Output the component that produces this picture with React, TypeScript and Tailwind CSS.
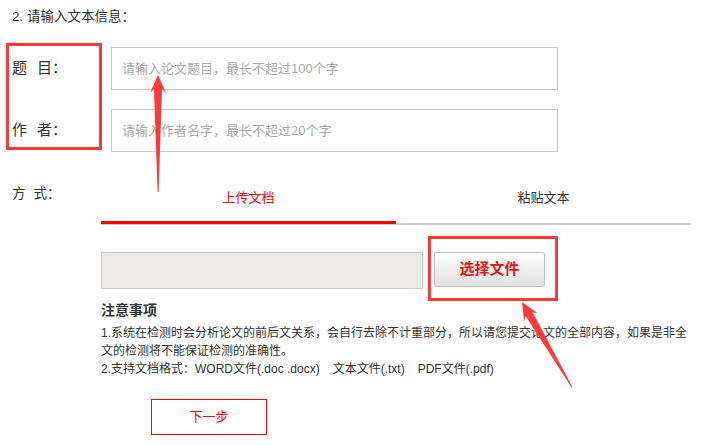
import React from "react";

const font = "font-['Liberation_Sans','Noto_Sans_CJK_SC',sans-serif]";

const App = () => {
  return (
    <div className={`relative w-[704px] h-[445px] overflow-hidden bg-white text-[#333] ${font}`}>
      {/* 标题 */}
      <div className="pl-[12px] pt-[8px] text-[13.5px] leading-[18px]">2. 请输入文本信息：</div>

      {/* 题目 */}
      <div className="mt-[21px] flex items-center">
        <div className="w-[111px] pl-[12px] text-[15px]">
          题<span className="ml-[10px]">目：</span>
        </div>
        <input
          className="w-[447px] h-[43px] border border-[#c8c8c8] px-[10px] text-[13px] outline-none placeholder:text-[#aaa]"
          placeholder="请输入论文题目，最长不超过100个字"
        />
      </div>

      {/* 作者 */}
      <div className="mt-[19px] flex items-center">
        <div className="w-[111px] pl-[12px] text-[15px]">
          作<span className="ml-[10px]">者：</span>
        </div>
        <input
          className="w-[447px] h-[43px] border border-[#c8c8c8] px-[10px] text-[13px] outline-none placeholder:text-[#aaa]"
          placeholder="请输入作者名字，最长不超过20个字"
        />
      </div>

      {/* 方式 */}
      <div className="mt-[23px] flex items-start">
        <div className="w-[101px] pl-[12px] pt-[9px] text-[13.5px] leading-[20px]">
          方<span className="ml-[8px]">式：</span>
        </div>
        <div className="w-[590px]">
          {/* tabs */}
          <div className="flex">
            <div className="flex-1 flex flex-col">
              <div className="h-[46px] flex items-center justify-center text-[13px] text-[#ff0000]">上传文档</div>
              <div className="h-[3px] bg-[#ff0000]" />
            </div>
            <div className="flex-1 flex flex-col">
              <div className="h-[46px] flex items-center justify-center text-[13px] text-[#333]">粘贴文本</div>
              <div className="h-[3px] flex flex-col justify-end">
                <div className="h-px bg-[#ccc]" />
              </div>
            </div>
          </div>
          <div className="h-px bg-[#ccc]" />

          {/* 上传 */}
          <div className="mt-[27px] flex items-start">
            <div className="w-[322px] h-[37px] bg-[#ebeae4] border border-[#ccc]" />
            <button className="ml-[11px] w-[111px] h-[35px] rounded-[3px] border border-[#c0c0c0] bg-gradient-to-b from-[#fdfdfd] to-[#e2e2e2] text-[15px] font-bold text-[#e8140f]">
              选择文件
            </button>
          </div>

          {/* 注意事项 */}
          <div className="mt-[11px] text-[14px] leading-[20px] font-bold text-[#333]">注意事项</div>
          <div className="mt-[4px] text-[12px] leading-[18px] text-[#333] whitespace-nowrap">
            <div>1.系统在检测时会分析论文的前后文关系，会自行去除不计重部分，所以请您提交论文的全部内容，如果是非全</div>
            <div>文的检测将不能保证检测的准确性。</div>
            <div className="flex">
              <span>2.支持文档格式：WORD文件(.doc .docx)</span>
              <span className="ml-[13px]">文本文件(.txt)</span>
              <span className="ml-[13px]">PDF文件(.pdf)</span>
            </div>
          </div>

          <button className="mt-[21px] ml-[50px] w-[116px] h-[36px] border border-[#ff0000] text-[13px] text-[#ff0000] bg-white">
            下一步
          </button>
        </div>
      </div>

      {/* 标注：红框与箭头 */}
      <div className="absolute left-[6px] top-[43px] w-[96px] h-[107px] border-[3px] border-[#fb3a3a]" />
      <div className="absolute left-[428px] top-[236px] w-[130px] h-[65px] border-[3px] border-[#fb3a3a]" />
      <svg className="absolute left-0 top-0 pointer-events-none" width="704" height="445" viewBox="0 0 704 445">
        <polygon
          fill="#fb3a3a"
          points="158,75 166,93 162,89 158.6,192 157.6,192 154,89 150,93"
        />
        <polygon
          fill="#fb3a3a"
          points="522,302 538,313.4 532.5,312.1 572.4,387 571.6,387.4 525.6,316.1 524.2,321.6"
        />
      </svg>
    </div>
  );
};

export default App;
